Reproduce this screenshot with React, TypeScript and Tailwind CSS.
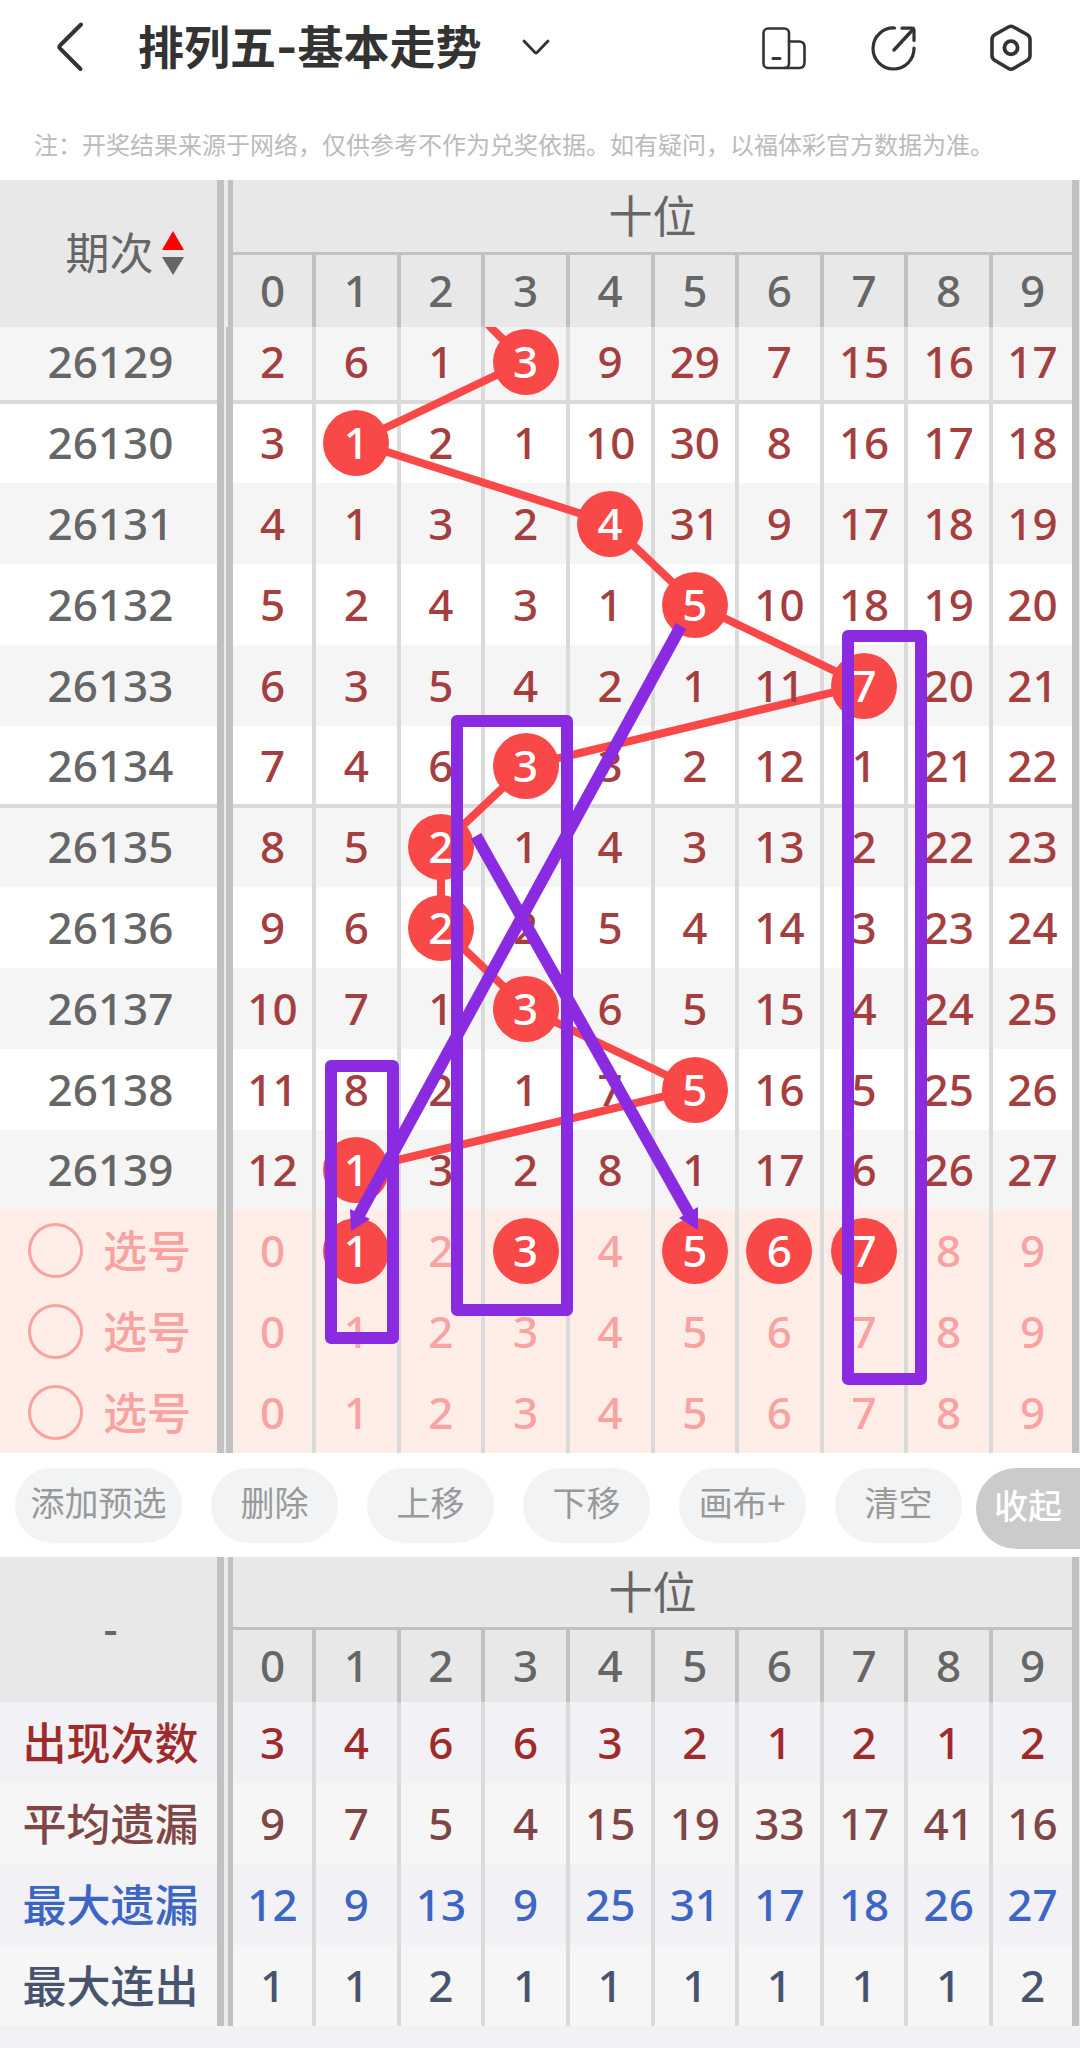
import React, { useState } from 'react'
import clsx from 'clsx'

const DIGITS = [0, 1, 2, 3, 4, 5, 6, 7, 8, 9]

const DRAWS = [
    { issue: '26129', hit: 3, cells: [2, 6, 1, 3, 9, 29, 7, 15, 16, 17] },
    { issue: '26130', hit: 1, cells: [3, 1, 2, 1, 10, 30, 8, 16, 17, 18] },
    { issue: '26131', hit: 4, cells: [4, 1, 3, 2, 4, 31, 9, 17, 18, 19] },
    { issue: '26132', hit: 5, cells: [5, 2, 4, 3, 1, 5, 10, 18, 19, 20] },
    { issue: '26133', hit: 7, cells: [6, 3, 5, 4, 2, 1, 11, 7, 20, 21] },
    { issue: '26134', hit: 3, cells: [7, 4, 6, 3, 3, 2, 12, 1, 21, 22] },
    { issue: '26135', hit: 2, cells: [8, 5, 2, 1, 4, 3, 13, 2, 22, 23] },
    { issue: '26136', hit: 2, cells: [9, 6, 2, 2, 5, 4, 14, 3, 23, 24] },
    { issue: '26137', hit: 3, cells: [10, 7, 1, 3, 6, 5, 15, 4, 24, 25] },
    { issue: '26138', hit: 5, cells: [11, 8, 2, 1, 7, 5, 16, 5, 25, 26] },
    { issue: '26139', hit: 1, cells: [12, 1, 3, 2, 8, 1, 17, 6, 26, 27] },
]

const STATS = [
    { label: '出现次数', color: 'text-[#a02a2a]', cells: [3, 4, 6, 6, 3, 2, 1, 2, 1, 2] },
    { label: '平均遗漏', color: 'text-[#804545]', cells: [9, 7, 5, 4, 15, 19, 33, 17, 41, 16] },
    { label: '最大遗漏', color: 'text-[#3c65c4]', cells: [12, 9, 13, 9, 25, 31, 17, 18, 26, 27] },
    { label: '最大连出', color: 'text-[#48546f]', cells: [1, 1, 2, 1, 1, 1, 1, 1, 1, 2] },
]

const ACTIONS = ['删除', '上移', '下移', '画布+', '清空']

// double rule on the right of the first column
const HEAD_RULE = 'shadow-[inset_-5px_0_#c1c1c1,inset_-9px_0_#ececec,inset_-16px_0_#c1c1c1]'
const RULE = 'shadow-[inset_-7px_0_#c1c1c1,inset_-9px_0_#ececec,inset_-16px_0_#c1c1c1]'
// same rule with half of the group line above or below
const RULE_END = 'shadow-[inset_-7px_0_#c1c1c1,inset_-9px_0_#ececec,inset_-16px_0_#c1c1c1,inset_0_-2px_#dadada]'
const RULE_START = 'shadow-[inset_-7px_0_#c1c1c1,inset_-9px_0_#ececec,inset_-16px_0_#c1c1c1,inset_0_2px_#dadada]'

function Cols() {
    return (
        <colgroup>
            <col className="w-[233px]" />
            <col className="w-[83px]" />
            <col span={8} />
            <col className="w-[86px]" />
        </colgroup>
    )
}

function DigitHeads() {
    return (
        <tr>
            {DIGITS.map((d) => (
                <th
                    key={d}
                    scope="col"
                    className="h-[72px] border-r-4 border-[#c1c1c1] p-0 pb-0.5 font-medium last:border-r-[7px]"
                >
                    {d}
                </th>
            ))}
        </tr>
    )
}

function Header() {
    return (
        <header className="flex h-[94px] items-center bg-white pr-[44px] pl-[52px] text-[#333]">
            <button type="button" aria-label="返回" className="mr-[44px]">
                <svg className="h-[54px] w-[42px]" viewBox="0 0 42 54" fill="none" stroke="currentColor" strokeWidth="4" strokeLinecap="round" strokeLinejoin="round">
                    <path d="M29 4.500L8 25.500Q6.700 27 8 28.400L28.500 49" />
                </svg>
            </button>
            <h1 className="font-['Inter','Noto_Sans_CJK_SC',sans-serif] text-[46px] leading-none font-bold whitespace-nowrap">
                排列五-基本走势
            </h1>
            <button type="button" aria-label="切换走势" className="ml-[39px]">
                <svg className="h-[18px] w-[30px]" viewBox="0 0 30 18" fill="none" stroke="currentColor" strokeWidth="2.800" strokeLinecap="round" strokeLinejoin="round">
                    <path d="M3 3L14 14.500Q15 15.500 16 14.500L27 3" />
                </svg>
            </button>
            <div className="ml-auto flex items-center">
                <button type="button" aria-label="横竖屏" className="mr-[61px]">
                    <svg className="size-[50px]" viewBox="0 0 50 50" fill="none" stroke="currentColor" strokeWidth="2.600" strokeLinecap="round" strokeLinejoin="round">
                        <rect x="4.500" y="6.500" width="25.500" height="39.500" rx="4.500" />
                        <path d="M30 19.500H40Q45.500 19.500 45.500 25V40.500Q45.500 46 40 46H26" />
                        <path d="M14 36.500H21" strokeWidth="3" />
                    </svg>
                </button>
                <button type="button" aria-label="分享" className="mr-[66px]">
                    <svg className="size-[50px]" viewBox="0 0 50 50" fill="none" stroke="currentColor" strokeWidth="3.200" strokeLinecap="round" strokeLinejoin="round">
                        <path d="M24.500 6A20.500 20.500 0 1 0 44 26" />
                        <path d="M32 6.200H42Q44 6.200 44 8.200V18.500" />
                        <path d="M42.500 8L24 28" strokeWidth="3.400" />
                    </svg>
                </button>
                <button type="button" aria-label="设置">
                    <svg className="size-[50px]" viewBox="0 0 50 50" fill="none" stroke="currentColor" strokeWidth="3.600" strokeLinejoin="round">
                        <path d="M22.500 5Q25 3.600 27.500 5L41 12.500Q44 14.200 44 17.500V33.500Q44 36.800 41 38.500L27.500 46.500Q25 48 22.500 46.500L9 38.500Q6 36.800 6 33.500V17.500Q6 14.200 9 12.500Z" />
                        <circle cx="25" cy="25.800" r="6.600" strokeWidth="3.800" />
                    </svg>
                </button>
            </div>
        </header>
    )
}

function TrendLine() {
    return (
        <svg
            className="pointer-events-none absolute inset-0 size-full"
            viewBox="0 0 1080 1273"
            preserveAspectRatio="none"
            fill="none"
            stroke="#f84848"
            strokeWidth="8"
        >
            <path d="M485 147H496L528 177.500L522 185Z" fill="#f84848" stroke="none" />
            <polyline points="526,181 356,262 610,343 695,424 864,505 526,586 441,666 441,747 526,828 695,909 356,990" />
        </svg>
    )
}

function Marks() {
    return (
        <svg
            className="pointer-events-none absolute inset-0 z-20 size-full"
            viewBox="0 0 1080 1273"
            preserveAspectRatio="none"
            fill="none"
            stroke="#8a2be2"
            strokeWidth="12"
            strokeLinejoin="round"
        >
            <rect x="457" y="541" width="110" height="589" />
            <rect x="848" y="456" width="73" height="743" />
            <rect x="331" y="886" width="62" height="272" />
            <path d="M681 446L359 1035" />
            <path d="M476 656L689 1034" />
            <path d="M350 1029L370 1039L351 1051Z" fill="#8a2be2" stroke="none" />
            <path d="M679 1038L698 1027L698 1050Z" fill="#8a2be2" stroke="none" />
        </svg>
    )
}

function TrendTable() {
    const [picked, setPicked] = useState<string[]>(['0-1', '0-3', '0-5', '0-6', '0-7'])

    const toggle = (key: string) =>
        setPicked((prev) => (prev.includes(key) ? prev.filter((k) => k !== key) : [...prev, key]))

    return (
        <div className="relative">
            <table className="w-full table-fixed border-separate border-spacing-0 bg-[#e8e8e8] pr-px text-center text-[44px] leading-none font-medium text-[#666]">
                <Cols />
                <thead>
                    <tr>
                        <th rowSpan={2} scope="col" className={clsx('p-0 pr-4 pb-0.5 pl-8 font-normal', HEAD_RULE)}>
                            <button type="button" className="inline-flex items-center gap-2 leading-none">
                                期次
                                <svg className="h-[44px] w-[22px]" viewBox="0 0 22 44">
                                    <path d="M11 0L22 19H0Z" fill="#f00" />
                                    <path d="M0 26H22L11 44Z" fill="#666" />
                                </svg>
                            </button>
                        </th>
                        <th colSpan={10} scope="colgroup" className="h-[75px] border-r-[7px] border-b-[3px] border-[#c1c1c1] p-0 font-normal">
                            十位
                        </th>
                    </tr>
                    <DigitHeads />
                </thead>
                <tbody>
                    {DRAWS.map((row, i) => {
                        const end = i % 5 === 0 && i < 10
                        const start = i % 5 === 1
                        return (
                            <tr key={row.issue} className={i % 2 ? 'bg-white' : 'bg-[#f5f5f5]'}>
                                <th
                                    scope="row"
                                    className={clsx(
                                        'p-0 pr-3 font-medium',
                                        i === 0 ? 'h-[75px] pb-2' : i % 5 === 0 ? 'h-[80px] pb-0.5' : 'h-[81px] pb-0.5',
                                        end ? RULE_END : start ? RULE_START : RULE,
                                    )}
                                >
                                    {row.issue}
                                </th>
                                {row.cells.map((n, c) => (
                                    <td
                                        key={c}
                                        className={clsx(
                                            'border-r-4 border-[#dadada] p-0 text-[#a53f3f] last:border-r-[7px] last:border-[#c1c1c1]',
                                            i === 0 ? (row.hit === c ? 'pb-1.5' : 'pb-2') : row.hit !== c && 'pb-0.5',
                                            end && 'shadow-[inset_0_-2px_#dadada]',
                                            start && 'shadow-[inset_0_2px_#dadada]',
                                        )}
                                    >
                                        {row.hit === c ? (
                                            <span className="relative z-10 mx-auto flex size-[66px] items-center justify-center rounded-full bg-[#f84848] pb-0.5 text-white">
                                                {n}
                                            </span>
                                        ) : (
                                            <span className="relative z-10">{n}</span>
                                        )}
                                    </td>
                                ))}
                            </tr>
                        )
                    })}
                    {[0, 1, 2].map((r) => (
                        <tr key={r} className="bg-[#ffeee8] text-[#f8a2a2]">
                            <th scope="row" className={clsx('h-[81px] p-0 font-medium', RULE)}>
                                <label className="flex items-center gap-5 pl-7">
                                    <input type="radio" name="pick-row" className="size-[55px] appearance-none rounded-full border-[3px] border-[#f8a2a2]" />
                                    选号
                                </label>
                            </th>
                            {DIGITS.map((d) => {
                                const key = `${r}-${d}`
                                return (
                                    <td key={d} className="border-r-4 border-[#dadada] p-0 last:border-r-[7px] last:border-[#c1c1c1]">
                                        <button
                                            type="button"
                                            onClick={() => toggle(key)}
                                            className={clsx(
                                                'relative z-10 mx-auto flex size-[66px] items-center justify-center rounded-full pb-0.5 leading-none',
                                                picked.includes(key) && 'bg-[#f84848] text-white',
                                            )}
                                        >
                                            {d}
                                        </button>
                                    </td>
                                )
                            })}
                        </tr>
                    ))}
                </tbody>
            </table>
            <TrendLine />
            <Marks />
        </div>
    )
}

function Toolbar() {
    return (
        <div className="flex h-[104px] items-start bg-white pt-[15px] pl-[15px] text-[34px] text-[#999]">
            <div className="flex gap-[29px]">
                <button type="button" className="h-[75px] w-[167px] rounded-full bg-[#f1f3f5] pb-1.5 leading-none">
                    添加预选
                </button>
                {ACTIONS.map((name) => (
                    <button key={name} type="button" className="h-[75px] w-[127px] rounded-full bg-[#f1f3f5] pb-1.5 leading-none">
                        {name}
                    </button>
                ))}
            </div>
            <button type="button" className="ml-auto h-[81px] w-[104px] rounded-l-full bg-[#cbcbcb] pb-1.5 leading-none font-medium text-white">
                收起
            </button>
        </div>
    )
}

function StatsTable() {
    return (
        <table className="w-full table-fixed border-separate border-spacing-0 bg-[#e8e8e8] pr-px text-center text-[44px] leading-none font-medium text-[#666]">
            <Cols />
            <thead>
                <tr>
                    <th rowSpan={2} scope="col" className={clsx('p-0 pr-3 pb-1 font-medium', HEAD_RULE)}>
                        -
                    </th>
                    <th colSpan={10} scope="colgroup" className="h-[73px] border-r-[7px] border-b-[3px] border-[#c1c1c1] p-0 font-normal">
                        十位
                    </th>
                </tr>
                <DigitHeads />
            </thead>
            <tbody>
                {STATS.map((row, i) => (
                    <tr key={row.label} className={clsx(row.color, i % 2 ? 'bg-[#f6f6f6]' : 'bg-[#f1f1f6]')}>
                        <th scope="row" className={clsx('h-[81px] p-0 pr-3 font-medium', HEAD_RULE)}>
                            {row.label}
                        </th>
                        {row.cells.map((n, c) => (
                            <td key={c} className="border-r-4 border-[#dadada] p-0 pb-0.5 last:border-r-[7px] last:border-[#c1c1c1]">
                                {n}
                            </td>
                        ))}
                    </tr>
                ))}
            </tbody>
        </table>
    )
}

export default function App() {
    return (
        <div className="min-h-screen bg-[#f1f1f6] font-['Noto_Sans','Noto_Sans_CJK_SC',sans-serif]">
            <Header />
            <p className="h-[86px] bg-white pt-[39px] pl-[34px] text-[24px] leading-[24px] whitespace-nowrap text-[#bbb]">
                注：开奖结果来源于网络，仅供参考不作为兑奖依据。如有疑问，以福体彩官方数据为准。
            </p>
            <TrendTable />
            <Toolbar />
            <StatsTable />
        </div>
    )
}
